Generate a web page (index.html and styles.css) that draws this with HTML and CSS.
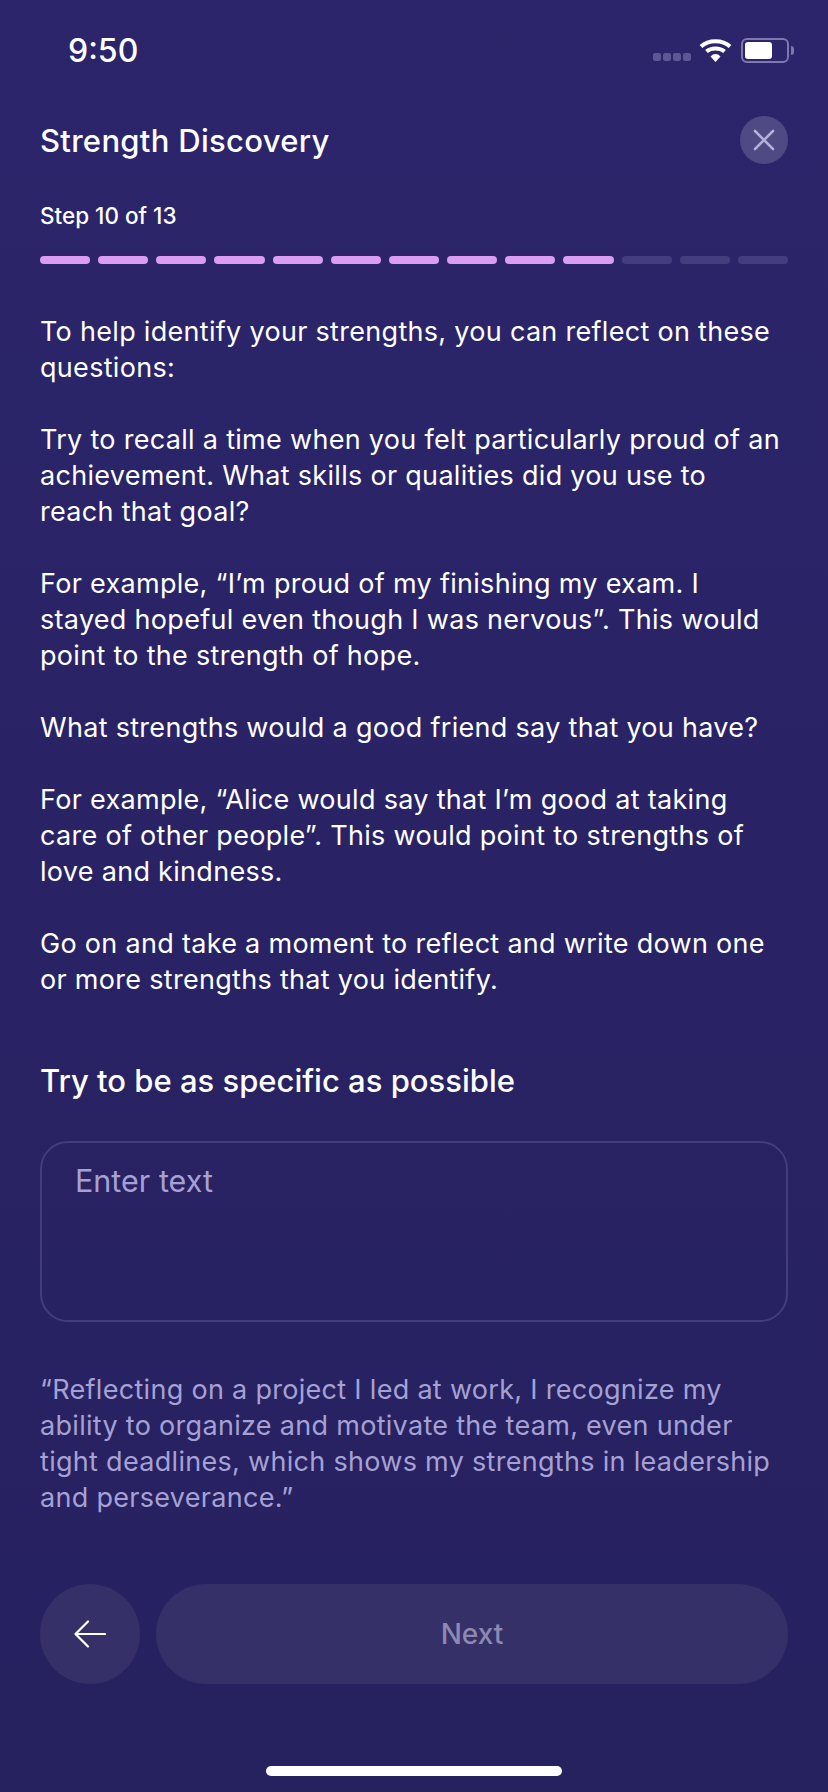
FILE: index.html
```html
<!DOCTYPE html>
<html lang="en">
<head>
  <meta charset="UTF-8">
  <meta name="viewport" content="width=device-width, initial-scale=1.0">
  <title>Strength Discovery</title>
  <link rel="stylesheet" href="styles.css">
</head>
<body>

<div class="status-bar">
  <span class="time">9:50</span>
  <div class="status-icons">
    <div class="signal"><i></i><i></i><i></i><i></i></div>
    <svg class="wifi" width="33" height="24" viewBox="0 0 33 24">
      <path d="M2 8.5C9.5 1.5 23.5 1.5 31 8.5" fill="none" stroke="#fff" stroke-width="4"/>
      <path d="M7.5 13.5C12 9.5 21 9.5 25.5 13.5" fill="none" stroke="#fff" stroke-width="4"/>
      <path d="M11.5 18.5C14.5 15.2 18.5 15.2 21.5 18.5L16.5 24Z" fill="#fff"/>
    </svg>
    <div class="battery"><div class="battery-fill"></div></div>
    <div class="battery-cap"></div>
  </div>
</div>

<header class="top-row">
  <h1>Strength Discovery</h1>
  <button class="close-btn" aria-label="Close">
    <svg width="22" height="22" viewBox="0 0 22 22">
      <path d="M2 2L20 20M20 2L2 20" stroke="#b5b0d8" stroke-width="2.6" stroke-linecap="round"/>
    </svg>
  </button>
</header>

<div class="step-label">Step 10 of 13</div>
<div class="progress">
  <span class="on"></span><span class="on"></span><span class="on"></span><span class="on"></span><span class="on"></span>
  <span class="on"></span><span class="on"></span><span class="on"></span><span class="on"></span><span class="on"></span>
  <span></span><span></span><span></span>
</div>

<main class="copy">
  <p>To help identify your strengths, you can reflect on these<br>questions:</p>
  <p>Try to recall a time when you felt particularly proud of an<br>achievement. What skills or qualities did you use to<br>reach that goal?</p>
  <p>For example, “I’m proud of my finishing my exam. I<br>stayed hopeful even though I was nervous”. This would<br>point to the strength of hope.</p>
  <p>What strengths would a good friend say that you have?</p>
  <p>For example, “Alice would say that I’m good at taking<br>care of other people”. This would point to strengths of<br>love and kindness.</p>
  <p>Go on and take a moment to reflect and write down one<br>or more strengths that you identify.</p>
</main>

<h2 class="prompt">Try to be as specific as possible</h2>
<div class="text-box">Enter text</div>
<p class="hint">“Reflecting on a project I led at work, I recognize my<br>ability to organize and motivate the team, even under<br>tight deadlines, which shows my strengths in leadership<br>and perseverance.”</p>

<div class="actions">
  <button class="back-btn" aria-label="Back">
    <svg width="32" height="28" viewBox="0 0 32 28">
      <path d="M31 14H1.5M14 1.5L1.5 14L14 26.5" fill="none" stroke="#fff" stroke-width="2.2" stroke-linecap="round" stroke-linejoin="round"/>
    </svg>
  </button>
  <button class="next-btn">Next</button>
</div>

<div class="home-bar"></div>

</body>
</html>
```

FILE: styles.css
```css
* {
  box-sizing: border-box;
}

body {
  margin: 0;
  width: 828px;
  height: 1792px;
  overflow: hidden;
  padding: 0 40px;
  font-family: Inter, "Noto Sans", sans-serif;
  color: #fff;
  background: linear-gradient(180deg, #2c256b 0%, #26215f 100%);
}

button {
  border: none;
  padding: 0;
  font-family: inherit;
  cursor: pointer;
}

.status-bar {
  height: 100px;
  margin: 0 -6px 0 28px;
  display: flex;
  align-items: center;
  justify-content: space-between;
}

.time {
  font-size: 32px;
  font-weight: 500;
}

.status-icons {
  display: flex;
  align-items: center;
}

.signal {
  display: flex;
  gap: 2px;
  margin: 14px 8px 0 0;
}

.signal i {
  width: 8px;
  height: 8px;
  border-radius: 2px;
  background: #5d5795;
}

.wifi {
  margin-right: 9px;
}

.battery {
  width: 48px;
  height: 25px;
  padding: 2px;
  border: 2px solid #7d78b0;
  border-radius: 6px;
}

.battery-fill {
  width: 27px;
  height: 100%;
  background: #fff;
  border-radius: 3px;
}

.battery-cap {
  width: 3px;
  height: 9px;
  margin-left: 2px;
  background: #7d78b0;
  border-radius: 0 3px 3px 0;
}

.top-row {
  height: 48px;
  margin-top: 16px;
  display: flex;
  align-items: center;
  justify-content: space-between;
}

h1 {
  margin: 0;
  font-size: 31px;
  font-weight: 500;
  letter-spacing: 0.3px;
}

.close-btn {
  width: 48px;
  height: 48px;
  border-radius: 50%;
  background: #4f4984;
  display: flex;
  align-items: center;
  justify-content: center;
}

.step-label {
  margin-top: 38px;
  height: 28px;
  line-height: 28px;
  font-size: 22.5px;
  font-weight: 500;
}

.progress {
  margin-top: 26px;
  display: flex;
  gap: 8px;
}

.progress span {
  flex: 1;
  height: 8px;
  border-radius: 4px;
  background: #443e7f;
}

.progress span.on {
  background: #db9cf4;
}

.copy {
  margin-top: 50px;
  font-size: 27px;
  line-height: 36px;
  letter-spacing: 0.3px;
}

.copy p {
  margin: 0 0 36px;
}

.prompt {
  margin: 63px 0 0;
  font-size: 31px;
  line-height: 40px;
  font-weight: 500;
}

.text-box {
  margin-top: 40px;
  height: 181px;
  padding: 20px 33px;
  border: 2px solid #433d7b;
  border-radius: 28px;
  font-size: 30.5px;
  line-height: 36px;
  color: #a6a1d4;
}

.hint {
  margin: 50px 0 0;
  font-size: 27px;
  line-height: 36px;
  letter-spacing: 0.3px;
  color: #a6a1d4;
}

.actions {
  margin-top: 68px;
  display: flex;
  gap: 16px;
}

.back-btn {
  width: 100px;
  height: 100px;
  border-radius: 50%;
  background: #353068;
  display: flex;
  align-items: center;
  justify-content: center;
}

.next-btn {
  flex: 1;
  height: 100px;
  border-radius: 50px;
  background: #353068;
  color: #8d89b0;
  font-size: 28px;
  font-weight: 500;
}

.home-bar {
  width: 296px;
  height: 10px;
  margin: 82px auto 0;
  border-radius: 5px;
  background: #fff;
}
```
